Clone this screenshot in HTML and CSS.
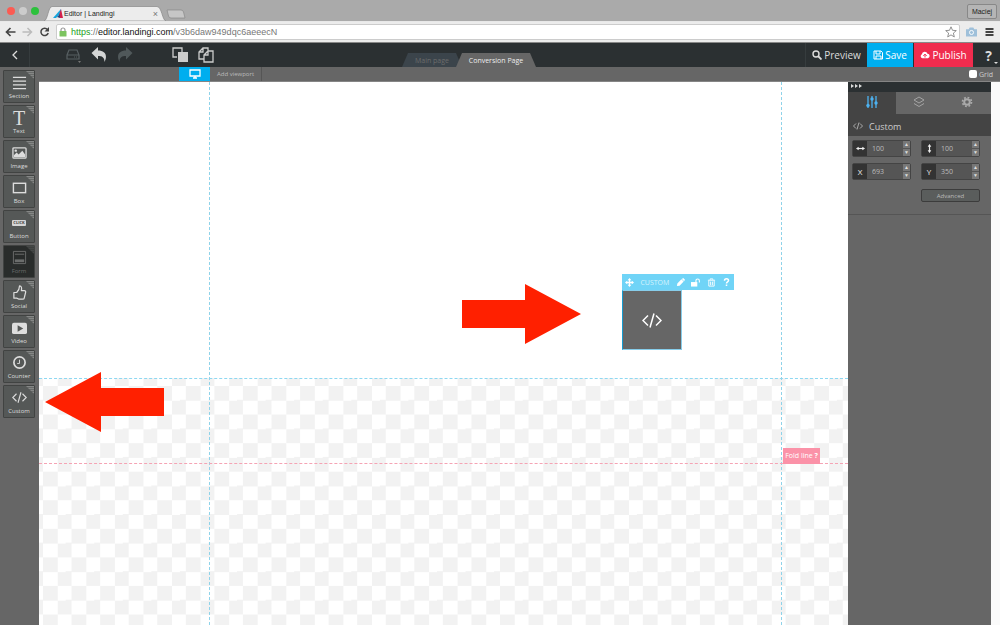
FILE: index.html
```html
<!DOCTYPE html>
<html lang="en">
<head>
    <meta charset="UTF-8">
    <meta name="viewport" content="width=device-width, initial-scale=1.0">
    <title>Editor | Landingi</title>
    <link rel="stylesheet" href="styles.css">
</head>
<body>
    <svg class="defs" aria-hidden="true">
        <symbol id="code" viewBox="0 0 20 14"><path d="M6 2L1 7l5 5M14 2l5 5-5 5M12 0L8 14" fill="none" stroke="currentColor" stroke-width="1.5"/></symbol>
        <symbol id="help" viewBox="0 0 12 16"><path d="M2 5.500C2 0 10 .5 10 5c0 3-4 2.500-4 6" fill="none" stroke="currentColor" stroke-width="3"/><rect x="4.500" y="13" width="3" height="3" fill="currentColor"/></symbol>
    </svg>

    <!-- Browser window -->
    <div class="browser">
        <div class="titlebar">
            <div class="lights"><i class="red"></i><i class="grey"></i><i class="green"></i></div>
            <div class="browser-tab">
                <svg class="tab-shape" viewBox="0 0 122 15" preserveAspectRatio="none"><path d="M0 15C4 14 4 1 8 .5H113C118 1 118 14 122 15z" fill="#ececec" stroke="#888" stroke-width=".7"/></svg>
                <svg class="favicon" viewBox="0 0 10 9"><path d="M0 9L8 0v4L3 9z" fill="#16a5dd"/><path d="M8 0l2 9H7l-1-3z" fill="#d4204c"/><path d="M4 8l3-3v4z" fill="#324276"/></svg>
                <span class="tab-title">Editor | Landingi</span>
                <button class="close" aria-label="Close tab">×</button>
            </div>
            <button class="new-tab" aria-label="New tab"><svg viewBox="0 0 20 10"><path d="M1 1h14q2 0 2.500 2L19 9H5Q3 9 2.500 7z" fill="#c6c6c6" stroke="#888" stroke-width=".7"/></svg></button>
            <button class="user">Maciej</button>
        </div>
        <div class="address-row">
            <button class="nav" aria-label="Back"><svg viewBox="0 0 10 10"><path d="M10 5H1M5 1L1 5l4 4" fill="none" stroke="#444" stroke-width="1.700"/></svg></button>
            <button class="nav" aria-label="Forward"><svg viewBox="0 0 10 10"><path d="M0 5h9M5 1l4 4-4 4" fill="none" stroke="#bbb" stroke-width="1.500"/></svg></button>
            <button class="nav" aria-label="Reload"><svg viewBox="0 0 10 10"><path d="M8 2.500A3.700 3.700 0 1 0 8.700 6" fill="none" stroke="#444" stroke-width="1.500"/><path d="M9.500 0v4.500H5z" fill="#444"/></svg></button>
            <div class="address">
                <svg class="lock" viewBox="0 0 8 10"><path d="M2 5V3a2 2 0 0 1 4 0v2" fill="none" stroke="#999" stroke-width="1.200"/><rect x=".5" y="4" width="7" height="5.500" rx=".5" fill="#7cc460"/></svg>
                <span class="url"><b>https</b>://<strong>editor.landingi.com</strong>/v3b6daw949dqc6aeeecN</span>
                <svg class="star" viewBox="0 0 12 12"><path d="M6 .8l1.500 3.500 3.800.3-2.900 2.500.9 3.800L6 8.900l-3.300 2 .9-3.800L.7 4.600l3.800-.3z" fill="#fff" stroke="#777" stroke-width=".8"/></svg>
            </div>
            <button class="nav" aria-label="Camera"><svg viewBox="0 0 12 10"><path d="M0 2h3l1-2h4l1 2h3v8H0z" fill="#9fc0da"/><circle cx="6" cy="5.500" r="2.200" fill="none" stroke="#fff"/></svg></button>
            <button class="nav menu" aria-label="Menu"><svg viewBox="0 0 10 10"><path d="M1 2h8M1 5h8M1 8h8" stroke="#444" stroke-width="1.800"/></svg></button>
        </div>
    </div>

    <!-- Editor header -->
    <header class="header">
        <button class="back" aria-label="Back to list"><svg viewBox="0 0 6 10"><path d="M5 1L1 5l4 4" fill="none" stroke="#ddd" stroke-width="1.300"/></svg></button>
        <div class="tools">
            <button class="tool disk" aria-label="Saved versions"><svg viewBox="0 0 16 16"><path d="M2 8l2-5h8l2 5v4H2zM2 8h12M9 10h1M11 10h1" fill="none" stroke="#586063" stroke-width="1.200"/><path d="M13 14h3l-1.500 2z" fill="#777"/></svg></button>
            <button class="tool" aria-label="Undo"><svg viewBox="0 0 16 16"><path d="M7 0v3.500C14 3.500 17 8 13.500 15 13.500 10 11 9 7 9v3.500L.5 6z" fill="#d3d5d5"/></svg></button>
            <button class="tool" aria-label="Redo"><svg viewBox="0 0 16 16"><path d="M9 0v3.500C2 3.500-1 8 2.500 15 2.500 10 5 9 9 9v3.500L15.500 6z" fill="#50585a"/></svg></button>
            <button class="tool copy" aria-label="Copy"><svg viewBox="0 0 16 16"><path d="M5 10H1V1h9v4" fill="none" stroke="#ccc" stroke-width="1.300"/><rect x="6" y="5" width="10" height="10" fill="#ccc"/></svg></button>
            <button class="tool" aria-label="Paste"><svg viewBox="0 0 16 16"><path d="M6 12H1V5l4-4h5v3M5 1v4H1M6 8l4-4h5v11H6zM10 4v4H6" fill="none" stroke="#ccc" stroke-width="1.300"/></svg></button>
        </div>
        <nav class="pages">
            <a class="page" href="#main">Main page</a>
            <a class="page active" href="#conversion">Conversion Page</a>
        </nav>
        <div class="actions">
            <button class="preview"><svg viewBox="0 0 10 10"><circle cx="4" cy="4" r="3" fill="none" stroke="currentColor" stroke-width="1.400"/><path d="M6 6l3.500 3.500" stroke="currentColor" stroke-width="1.800"/></svg>Preview</button>
            <button class="save"><svg viewBox="0 0 10 10"><path d="M1 1h7l1.500 1.500V9H1zM3 1v3h4V1M3 9V6h5v3" fill="none" stroke="currentColor"/></svg>Save</button>
            <button class="publish"><svg viewBox="0 0 12 10"><path d="M3 9a2.700 2.700 0 0 1-.8-5A3.500 3.500 0 0 1 9 3.500 2.800 2.800 0 0 1 9.500 9z" fill="currentColor"/><path d="M6 8V4M4 6l2-2 2 2" fill="none" stroke="#f02c4e" stroke-width="1.200"/></svg>Publish</button>
            <button class="question" aria-label="Help">?<i></i></button>
        </div>
    </header>

    <div class="editor">
        <!-- Widgets -->
        <aside class="widgets">
            <button class="widget"><svg viewBox="0 0 16 16"><path d="M1 2.500h14M1 6.500h14M1 10.500h14M1 14.500h14" stroke="currentColor" stroke-width="1.400"/></svg>Section</button>
            <button class="widget"><span class="letter">T</span>Text</button>
            <button class="widget"><svg viewBox="0 0 16 16"><rect x="1" y="3" width="14" height="11" rx="1" fill="none" stroke="currentColor" stroke-width="1.400"/><path d="M2 13v-2l3-3 2 2 4-4 3 4v3z" fill="currentColor"/><circle cx="4" cy="6" r="1.300" fill="currentColor"/></svg>Image</button>
            <button class="widget"><svg viewBox="0 0 16 16"><rect x="1.500" y="3.500" width="13" height="10" fill="none" stroke="currentColor" stroke-width="1.500"/></svg>Box</button>
            <button class="widget"><span class="click">CLICK</span>Button</button>
            <button class="widget pressed"><svg viewBox="0 0 16 16"><path d="M1.500 1.500h13v13h-13zM3 4.500h10" fill="none" stroke="currentColor"/><path d="M3 10h10v3H3z" fill="currentColor"/></svg>Form</button>
            <button class="widget"><svg viewBox="0 0 16 16"><path d="M2 8h3q3-3 3-7 3 0 2 5h3q2 0 1.500 2L13 14q0 1-2 1H7l-2-1H2z" fill="none" stroke="currentColor" stroke-width="1.300" stroke-linejoin="round"/></svg>Social</button>
            <button class="widget"><svg viewBox="0 0 16 16"><rect x="0" y="3" width="16" height="12" rx="2" fill="currentColor"/><path d="M6 5.500l6 3.500-6 3.500z" fill="#555857"/></svg>Video</button>
            <button class="widget"><svg viewBox="0 0 16 16"><circle cx="8" cy="8" r="6" fill="none" stroke="currentColor" stroke-width="1.800"/><path d="M8 5v4H5.500" fill="none" stroke="currentColor"/></svg>Counter</button>
            <button class="widget"><svg><use href="#code"/></svg>Custom</button>
        </aside>

        <main class="workspace">
            <div class="viewports">
                <button class="desktop" aria-label="Desktop"><svg viewBox="0 0 12 10"><path d="M1 1h10v6H1zM4 9h4M6 7v2" fill="none" stroke="#fff" stroke-width="1.300"/></svg></button>
                <button class="add">Add viewport</button>
                <label class="grid-toggle"><input type="checkbox">Grid</label>
            </div>
            <div class="stage">
                <div class="canvas">
                    <div class="outside"></div>
                    <div class="guide left"></div>
                    <div class="guide right"></div>
                    <div class="fold"><span class="fold-label">Fold line <b>?</b></span></div>
                    <svg class="arrow arrow-right" viewBox="0 0 119 60"><path d="M0 16h63V0l56 30-56 30V44H0z" fill="#ff2000"/></svg>
                    <svg class="arrow arrow-left" viewBox="0 0 119 60"><path d="M119 16H56V0L0 30l56 30V44h63z" fill="#ff2000"/></svg>
                    <div class="element">
                        <div class="element-bar">
                            <button aria-label="Move"><svg viewBox="0 0 10 10"><path d="M5 1v8M1 5h8" stroke="currentColor" stroke-width="1.500"/><path d="M5 0l2 2.500H3zM5 10l2-2.500H3zM0 5l2.500-2v4zM10 5L7.500 3v4z" fill="currentColor"/></svg></button>
                            <span>CUSTOM</span>
                            <button aria-label="Edit"><svg viewBox="0 0 10 10"><path d="M1 9l.5-3L6 1.500 8.500 4 4 8.500zM6.500 1L8 0l2 2-1 1.500z" fill="currentColor"/></svg></button>
                            <button aria-label="Unlock"><svg viewBox="0 0 10 10"><rect y="4.500" width="7" height="5" fill="currentColor"/><path d="M5.500 5V3a1.900 1.900 0 0 1 3.800 0v2" fill="none" stroke="currentColor" stroke-width="1.200"/></svg></button>
                            <button aria-label="Delete"><svg viewBox="0 0 10 10"><path d="M1 2.500h8M3.500 2V1h3v1M2 3v6h6V3M4 4v4M6 4v4" fill="none" stroke="currentColor"/></svg></button>
                            <button class="element-help" aria-label="Help"><svg><use href="#help"/></svg></button>
                        </div>
                        <div class="element-box"><svg><use href="#code"/></svg></div>
                    </div>
                </div>

                <!-- Properties -->
                <aside class="panel">
                    <button class="collapse" aria-label="Collapse panel"><svg viewBox="0 0 12 6"><path d="M0 1l3 2-3 2zM4 1l3 2-3 2zM8 1l3 2-3 2z" fill="#ddd"/></svg></button>
                    <div class="panel-tabs">
                        <button class="active" aria-label="Settings"><svg viewBox="0 0 12 12"><path d="M2 0v12M6 0v12M10 0v12" stroke="currentColor" stroke-width="1.300"/><circle cx="2" cy="9.500" r="1.700" fill="currentColor"/><circle cx="6" cy="3" r="1.700" fill="currentColor"/><circle cx="10" cy="7" r="1.700" fill="currentColor"/></svg></button>
                        <button aria-label="Layers"><svg viewBox="0 0 12 12"><path d="M6 1l5 3-5 3-5-3zM1 7.500l5 3 5-3" fill="none" stroke="currentColor" stroke-width=".9"/></svg></button>
                        <button aria-label="Options"><svg viewBox="0 0 12 12"><circle cx="6" cy="6" r="2.800" fill="none" stroke="currentColor" stroke-width="2"/><circle cx="6" cy="6" r="4.500" fill="none" stroke="currentColor" stroke-width="1.700" stroke-dasharray="1.800 1.734"/></svg></button>
                    </div>
                    <h2><svg><use href="#code"/></svg>Custom</h2>
                    <form class="fields">
                        <div class="field"><label for="width" aria-label="Width"><svg viewBox="0 0 10 10"><path d="M1 5h8" stroke="currentColor" stroke-width="1.300"/><path d="M0 5l3-2v4zM10 5L7 3v4z" fill="currentColor"/></svg></label><input id="width" type="text" value="100"><span class="steps"><button type="button" aria-label="Increase width">▲</button><button type="button" aria-label="Decrease width">▼</button></span></div>
                        <div class="field"><label for="height" aria-label="Height"><svg viewBox="0 0 10 10"><path d="M5 1v8" stroke="currentColor" stroke-width="1.300"/><path d="M5 0L3 3h4zM5 10L3 7h4z" fill="currentColor"/></svg></label><input id="height" type="text" value="100"><span class="steps"><button type="button" aria-label="Increase height">▲</button><button type="button" aria-label="Decrease height">▼</button></span></div>
                        <div class="field"><label for="x">X</label><input id="x" type="text" value="693"><span class="steps"><button type="button" aria-label="Increase X">▲</button><button type="button" aria-label="Decrease X">▼</button></span></div>
                        <div class="field"><label for="y">Y</label><input id="y" type="text" value="350"><span class="steps"><button type="button" aria-label="Increase Y">▲</button><button type="button" aria-label="Decrease Y">▼</button></span></div>
                        <button type="button" class="advanced">Advanced</button>
                    </form>
                </aside>
                <div class="gutter"></div>
            </div>
        </main>
    </div>
</body>
</html>
```

FILE: styles.css
```css
* {
    box-sizing: border-box;
}
body {
    display: flex;
    flex-direction: column;
    min-height: 100vh;
    margin: 0;
    font-family: "Open Sans", sans-serif;
    background: #666;
    color: #ddd;
}
button {
    margin: 0;
    padding: 0;
    border: 0;
    background: none;
    color: inherit;
    font-family: inherit;
}
svg {
    display: block;
    flex: none;
}
.defs {
    position: absolute;
    width: 0;
    height: 0;
}

/* browser */
.browser {
    font-family: "Liberation Sans", Arial, sans-serif;
    color: #222;
}
.titlebar {
    display: flex;
    align-items: flex-end;
    height: 21px;
    padding: 0 3px 0 7px;
    background: #aaa;
}
.lights {
    display: flex;
    gap: 4px;
    margin-right: 5px;
    padding-bottom: 6px;
}
.lights i {
    width: 8px;
    height: 8px;
    border-radius: 50%;
}
.red {
    background: #fc5b52;
}
.grey {
    background: #ccc;
}
.green {
    background: #2cc13c;
}
.browser-tab {
    position: relative;
    display: flex;
    align-items: center;
    width: 122px;
    height: 15px;
    padding: 0 8px 0 9px;
    font-size: 7px;
}
.tab-shape {
    position: absolute;
    inset: 0;
    width: 100%;
    height: 100%;
}
.favicon {
    position: relative;
    width: 10px;
    height: 9px;
}
.tab-title {
    position: relative;
    flex: 1;
    padding-left: 1px;
}
.close {
    position: relative;
    color: #777;
    font-size: 9px;
}
.new-tab {
    padding-bottom: 2px;
}
.new-tab svg {
    width: 20px;
    height: 10px;
}
.user {
    width: 30px;
    height: 15px;
    margin: 0 0 2px auto;
    border: 1px solid #888;
    border-radius: 2px;
    background: #b5b5b5;
    font-size: 7px;
}
.address-row {
    display: flex;
    align-items: center;
    gap: 6px;
    height: 22px;
    padding: 0 5px;
    border-top: 1px solid #e8e8e8;
    border-bottom: 1px solid #888;
    background: #ececec;
}
.nav svg {
    width: 11px;
    height: 10px;
}
.nav.menu {
    margin-left: 1px;
}
.address {
    display: flex;
    flex: 1;
    align-items: center;
    height: 16px;
    padding: 0 2px;
    border: 1px solid #ccc;
    border-radius: 2px;
    background: #fff;
}
.lock {
    width: 8px;
    height: 10px;
    margin-right: 4px;
}
.url {
    flex: 1;
    color: #777;
    font-size: 9px;
}
.url b {
    color: #1da11d;
    font-weight: normal;
}
.url strong {
    color: #111;
    font-weight: normal;
}
.star {
    width: 12px;
    height: 12px;
}

/* editor header */
.header {
    position: relative;
    display: flex;
    height: 24px;
    background: #2b3032;
}
.back {
    display: flex;
    align-items: center;
    justify-content: center;
    width: 30px;
    border-right: 1px solid #363c3e;
}
.back svg {
    width: 6px;
    height: 10px;
}
.tools {
    display: flex;
    gap: 10px;
    padding-left: 35px;
}
.tool svg {
    width: 16px;
    height: 16px;
}
.copy {
    margin-left: 29px;
}
.pages {
    position: absolute;
    bottom: 0;
    left: 402px;
    display: flex;
}
.page {
    width: 60px;
    height: 14px;
    background: #3b444b;
    clip-path: polygon(6px 0, calc(100% - 6px) 0, 100% 100%, 0 100%);
    color: #6c6c6c;
    font-size: 7px;
    line-height: 15px;
    text-align: center;
    text-decoration: none;
}
.page.active {
    width: 80px;
    margin-left: -6px;
    background: #666;
    color: #eee;
}
.actions {
    display: flex;
    margin-left: auto;
}
.actions button {
    display: flex;
    align-items: center;
    justify-content: center;
    gap: 2px;
    font-size: 10px;
}
.actions svg {
    width: 10px;
    height: 10px;
}
.preview {
    width: 62px;
    border-left: 1px solid #363c3e;
}
.save {
    width: 46px;
    background: #00aeef;
    color: #fff;
}
.publish {
    width: 60px;
    border-left: 1px solid #2b3032;
    background: #f02c4e;
    color: #fff;
}
.actions .question {
    position: relative;
    width: 27px;
    padding-left: 4px;
    font-size: 14px;
    font-weight: bold;
}
.question i {
    position: absolute;
    right: 2px;
    bottom: 3px;
    border: 2px solid transparent;
    border-top-color: #ddd;
    border-bottom: 0;
}

/* widgets */
.editor {
    display: flex;
    flex: 1;
}
.widgets {
    display: flex;
    flex-direction: column;
    gap: 2px;
    width: 39px;
    padding: 3px;
    background: #666;
}
.widget {
    position: relative;
    display: flex;
    flex-direction: column;
    align-items: center;
    justify-content: space-between;
    width: 32px;
    height: 33px;
    padding: 4px 0 2px;
    border: 1px solid #414342;
    border-radius: 1px;
    background: #555857;
    font-size: 6px;
    line-height: 8px;
}
.widget::after {
    content: "";
    position: absolute;
    top: 0;
    right: 0;
    width: 8px;
    height: 8px;
    background: repeating-linear-gradient(#858786 0 1px, #686a69 1px 2px);
    clip-path: polygon(0 0, 100% 0, 100% 100%);
}
.widget svg {
    width: 15px;
    height: 15px;
}
.letter {
    font-family: "Liberation Serif", serif;
    font-size: 20px;
    line-height: 16px;
}
.click {
    margin-top: 5px;
    padding: 0 1px;
    border-radius: 1px;
    background: #d5d5d5;
    color: #444;
    font-size: 4px;
    font-weight: bold;
    line-height: 6px;
}
.widget.pressed {
    background: #292c2b;
    color: #6b6d6c;
}
.widget.pressed::after {
    opacity: 0.3;
}

/* workspace */
.workspace {
    display: flex;
    flex: 1;
    flex-direction: column;
}
.viewports {
    display: flex;
    height: 15px;
    padding-left: 140px;
    border-bottom: 1px solid #858585;
    background: #666;
}
.desktop {
    display: flex;
    align-items: center;
    justify-content: center;
    width: 31px;
    background: #00aeef;
}
.desktop svg {
    width: 12px;
    height: 10px;
}
.add {
    width: 52px;
    border-right: 1px solid #555;
    color: #bbb;
    font-size: 6px;
}
.grid-toggle {
    display: flex;
    align-items: center;
    gap: 2px;
    margin-left: auto;
    padding-right: 7px;
    color: #ccc;
    font-size: 7px;
}
.grid-toggle input {
    width: 8px;
    height: 8px;
    margin: 0;
    border-radius: 2px;
    appearance: none;
    background: #fff;
}
.stage {
    display: flex;
    flex: 1;
}
.canvas {
    position: relative;
    flex: 1;
    background: #fff;
}
.outside {
    position: absolute;
    inset: 296px 0 0;
    border-top: 1px dashed #8ed8f2;
    background: conic-gradient(#fff 25%, #f2f2f2 0 50%, #fff 0 75%, #f2f2f2 0) 4px 7px / calc(200px / 7) calc(200px / 7);
}
.guide {
    position: absolute;
    top: 0;
    bottom: 0;
    border-left: 1px dashed #8fd3ea;
}
.guide.left {
    left: 170px;
}
.guide.right {
    right: 66px;
}
.fold {
    position: absolute;
    top: 381px;
    left: 0;
    right: 0;
    border-top: 1px dashed #f5a3b4;
}
.fold-label {
    position: absolute;
    right: 28px;
    bottom: 0;
    width: 37px;
    background: #fb92a8;
    color: #fff;
    font-size: 7px;
    line-height: 16px;
    text-align: center;
}
.arrow {
    position: absolute;
    width: 119px;
    height: 60px;
}
.arrow-right {
    top: 202px;
    left: 423px;
}
.arrow-left {
    top: 290px;
    left: 6px;
}
.element {
    position: absolute;
    top: 192px;
    left: 583px;
}
.element-bar {
    display: flex;
    align-items: center;
    justify-content: space-between;
    width: 112px;
    height: 16px;
    padding: 0 3px;
    background: #70d4f7;
    color: #fff;
    font-size: 7px;
}
.element-bar svg {
    width: 9px;
    height: 9px;
}
.element-bar span {
    color: #d5f3fd;
}
.element-bar .element-help svg {
    height: 8px;
}
.element-box {
    display: flex;
    align-items: center;
    justify-content: center;
    width: 60px;
    height: 60px;
    border: 1px solid #87cdea;
    border-left-color: #159bd0;
    background: #666;
    color: #fff;
}
.element-box svg {
    width: 20px;
    height: 15px;
}

/* properties panel */
.panel {
    width: 143px;
    background: #666;
}
.gutter {
    width: 9px;
    background: #fafafa;
}
.collapse {
    display: block;
    width: 100%;
    height: 10px;
    padding: 1px 3px 3px;
    background: #2b3032;
}
.collapse svg {
    width: 12px;
    height: 6px;
}
.panel-tabs {
    display: grid;
    grid-template-columns: repeat(3, 1fr);
    height: 22px;
}
.panel-tabs button {
    display: flex;
    align-items: center;
    justify-content: center;
    padding-bottom: 2px;
    color: #aaa;
}
.panel-tabs svg {
    width: 12px;
    height: 12px;
}
.panel-tabs .active {
    background: #444;
    color: #4db2f0;
}
.panel h2 {
    display: flex;
    align-items: center;
    gap: 6px;
    height: 22px;
    margin: 0;
    padding: 2px 0 0 5px;
    background: #444;
    font-size: 9px;
    font-weight: normal;
    color: #ccc;
}
.panel h2 svg {
    width: 10px;
    height: 8px;
}
.fields {
    display: grid;
    grid-template-columns: 59px 59px;
    gap: 6px 10px;
    padding: 4px 4px 12px;
    border-bottom: 1px solid #555;
}
.field {
    display: flex;
    height: 17px;
    border: 1px solid #444;
    border-radius: 2px;
    background: #555;
}
.field label {
    display: flex;
    align-items: center;
    justify-content: center;
    width: 14px;
    background: #333;
    color: #eee;
    font-size: 8px;
    line-height: 12px;
}
.field svg {
    width: 9px;
    height: 9px;
}
.field input {
    flex: 1;
    min-width: 0;
    padding: 0 5px;
    border: 0;
    background: none;
    color: #bbb;
    font-family: inherit;
    font-size: 7px;
}
.steps {
    display: flex;
    flex-direction: column;
    gap: 1px;
    width: 7px;
}
.steps button {
    flex: 1;
    background: #777;
    color: #ddd;
    font-size: 5px;
    line-height: 7px;
}
.advanced {
    grid-column: 2;
    height: 13px;
    margin-top: 3px;
    border: 1px solid #3c3c3c;
    border-radius: 2px;
    background: #5a5d5c;
    color: #bbb;
    font-size: 6px;
}
```
